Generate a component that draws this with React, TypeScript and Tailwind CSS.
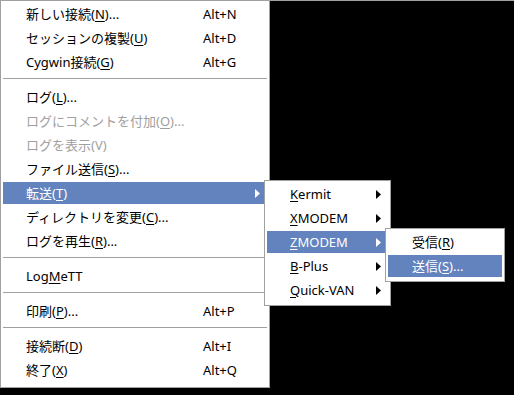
import type { ReactNode } from "react";

type Item =
  | { kind: "sep" }
  | {
      kind?: "item";
      label: ReactNode;
      shortcut?: string;
      disabled?: boolean;
      active?: boolean;
      arrow?: boolean;
    };

const FONT = "font-['Noto_Sans','Noto_Sans_CJK_JP',sans-serif]";

function U({ children }: { children: ReactNode }) {
  return <span className="underline underline-offset-[2px]">{children}</span>;
}

function Arrow({ light }: { light?: boolean }) {
  return (
    <svg width="5" height="9" viewBox="0 0 5 9" aria-hidden>
      <path d="M0 0 L5 4.5 L0 9 Z" fill={light ? "#ffffff" : "#000000"} />
    </svg>
  );
}

const MAIN: Item[] = [
  { label: <>新しい接続(<U>N</U>)...</>, shortcut: "Alt+N" },
  { label: <>セッションの複製(<U>U</U>)</>, shortcut: "Alt+D" },
  { label: <>Cygwin接続(<U>G</U>)</>, shortcut: "Alt+G" },
  { kind: "sep" },
  { label: <>ログ(<U>L</U>)...</> },
  { label: <>ログにコメントを付加(<U>O</U>)...</>, disabled: true },
  { label: <>ログを表示(V)</>, disabled: true },
  { label: <>ファイル送信(<U>S</U>)...</> },
  { label: <>転送(<U>T</U>)</>, active: true, arrow: true },
  { label: <>ディレクトリを変更(<U>C</U>)...</> },
  { label: <>ログを再生(<U>R</U>)...</> },
  { kind: "sep" },
  { label: <>Log<U>M</U>eTT</> },
  { kind: "sep" },
  { label: <>印刷(<U>P</U>)...</>, shortcut: "Alt+P" },
  { kind: "sep" },
  { label: <>接続断(<U>D</U>)</>, shortcut: "Alt+I" },
  { label: <>終了(<U>X</U>)</>, shortcut: "Alt+Q" },
];

const TRANSFER: Item[] = [
  { label: <><U>K</U>ermit</>, arrow: true },
  { label: <><U>X</U>MODEM</>, arrow: true },
  { label: <><U>Z</U>MODEM</>, arrow: true, active: true },
  { label: <><U>B</U>-Plus</>, arrow: true },
  { label: <><U>Q</U>uick-VAN</>, arrow: true },
];

const ZMODEM: Item[] = [
  { label: <>受信(<U>R</U>)</> },
  { label: <>送信(<U>S</U>)...</>, active: true },
];

function Menu({
  items,
  textPad,
  shortcutAt,
  arrowPad,
}: {
  items: Item[];
  textPad: string;
  shortcutAt?: string;
  arrowPad: string;
}) {
  return (
    <div className="flex flex-col">
      {items.map((item, i) => {
        if (item.kind === "sep") {
          return (
            <div key={i} className="flex h-[11px] flex-col pt-[4px]">
              <div className="mx-[2px] h-px bg-[#a0a0a0]" />
            </div>
          );
        }
        const tone = item.active
          ? "bg-[#6383be] text-white"
          : item.disabled
            ? "text-[#a0a0a0]"
            : "text-black";
        return (
          <div key={i} className="flex h-6 flex-col py-px">
            <div className={`mx-[2px] flex h-[22px] items-center ${tone}`}>
              <span className={`${textPad} whitespace-nowrap`}>{item.label}</span>
              {item.shortcut ? (
                <span className={`${shortcutAt} whitespace-nowrap`}>{item.shortcut}</span>
              ) : null}
              {item.arrow ? (
                <span className={`ml-auto flex ${arrowPad}`}>
                  <Arrow light={item.active} />
                </span>
              ) : null}
            </div>
          </div>
        );
      })}
    </div>
  );
}

export default function App() {
  return (
    <div
      className={`${FONT} relative h-[395px] w-[514px] overflow-hidden border-t border-[#a0a0a0] bg-black text-[13px] leading-none`}
    >
      <div className="w-[270px] border-x border-b border-[#a0a0a0] bg-white pb-[5px] pt-[1px]">
        <Menu
          items={MAIN}
          textPad="pl-[23px]"
          shortcutAt="absolute left-[203px]"
          arrowPad="pr-[7px]"
        />
      </div>

      <div className="absolute left-[264px] top-[179px] w-[127px] border border-[#a0a0a0] bg-white pb-[3px] pt-[1px]">
        <Menu items={TRANSFER} textPad="pl-[23px]" arrowPad="pr-[7px]" />
      </div>

      <div className="absolute left-[385px] top-[227px] w-[120px] border border-[#a0a0a0] bg-white pb-[3px] pt-[1px]">
        <Menu items={ZMODEM} textPad="pl-[24px]" arrowPad="pr-[7px]" />
      </div>
    </div>
  );
}
